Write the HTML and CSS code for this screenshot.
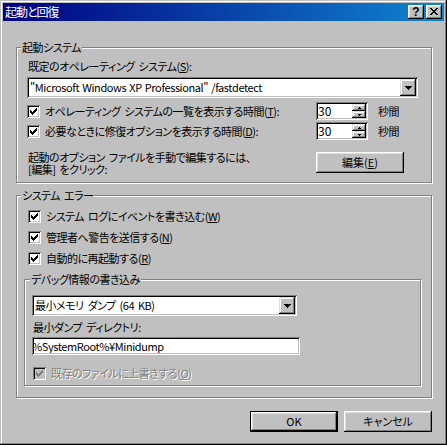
FILE: index.html
```html
<!DOCTYPE html>
<html lang="ja">
<head>
<meta charset="utf-8">
<title>起動と回復</title>
<link rel="stylesheet" href="styles.css">
</head>
<body>
<div class="window">
  <div class="titlebar">
    <span class="title">起動と回復</span>
    <div class="tbtns">
      <span class="tbtn help">?</span>
      <span class="tbtn close"><svg width="8" height="7" viewBox="0 0 8 7" shape-rendering="crispEdges"><path fill="#000" d="M0 0h2v1H0zM6 0h2v1H6zM1 1h2v1H1zM5 1h2v1H5zM2 2h4v1H2zM3 3h2v1H3zM2 4h4v1H2zM1 5h2v1H1zM5 5h2v1H5zM0 6h2v1H0zM6 6h2v1H6z"/></svg></span>
    </div>
  </div>
  <div class="client">
    <fieldset class="group g1">
      <legend class="lg1">起動システム</legend>
      <div class="body1">
        <div class="lbl">既定のオペレーティング システム(<u>S</u>):</div>
        <div class="combo combo1">
          <span class="ctext latin">"Microsoft Windows XP Professional" /fastdetect</span>
          <span class="dd"><svg width="7" height="4" viewBox="0 0 7 4" shape-rendering="crispEdges"><path fill="#000" d="M0 0h7v1H0zM1 1h5v1H1zM2 2h3v1H2zM3 3h1v1H3z"/></svg></span>
        </div>
        <div class="trow first">
          <span class="chk"><svg width="13" height="13" viewBox="0 0 13 13" shape-rendering="crispEdges"><path fill="#000" d="M9 3h1v1H9zM8 4h2v1H8zM3 5h1v1H3zM7 5h3v1H7zM3 6h2v1H3zM6 6h3v1H6zM3 7h5v1H3zM4 8h3v1H4zM5 9h1v1H5z"/></svg></span>
          <span class="tlabel">オペレーティング システムの一覧を表示する時間(<u>T</u>):</span>
          <span class="spin"><span class="stext">30</span><span class="sbtns"><span class="sb"><svg width="3" height="2" viewBox="0 0 3 2" shape-rendering="crispEdges"><path fill="#000" d="M1 0h1v1H1zM0 1h3v1H0z"/></svg></span><span class="sb"><svg width="3" height="2" viewBox="0 0 3 2" shape-rendering="crispEdges"><path fill="#000" d="M0 0h3v1H0zM1 1h1v1H1z"/></svg></span></span></span>
          <span class="unit">秒間</span>
        </div>
        <div class="trow">
          <span class="chk"><svg width="13" height="13" viewBox="0 0 13 13" shape-rendering="crispEdges"><path fill="#000" d="M9 3h1v1H9zM8 4h2v1H8zM3 5h1v1H3zM7 5h3v1H7zM3 6h2v1H3zM6 6h3v1H6zM3 7h5v1H3zM4 8h3v1H4zM5 9h1v1H5z"/></svg></span>
          <span class="tlabel">必要なときに修復オプションを表示する時間(<u>D</u>):</span>
          <span class="spin"><span class="stext">30</span><span class="sbtns"><span class="sb"><svg width="3" height="2" viewBox="0 0 3 2" shape-rendering="crispEdges"><path fill="#000" d="M1 0h1v1H1zM0 1h3v1H0z"/></svg></span><span class="sb"><svg width="3" height="2" viewBox="0 0 3 2" shape-rendering="crispEdges"><path fill="#000" d="M0 0h3v1H0zM1 1h1v1H1z"/></svg></span></span></span>
          <span class="unit">秒間</span>
        </div>
        <div class="note">
          <div class="notetext"><div>起動のオプション ファイルを手動で編集するには、</div><div>[編集] をクリック:</div></div>
          <span class="btn editbtn">編集(<u>E</u>)</span>
        </div>
      </div>
    </fieldset>

    <fieldset class="group g2">
      <legend class="lg1">システム エラー</legend>
      <div class="body2">
        <div class="crow">
          <span class="chk"><svg width="13" height="13" viewBox="0 0 13 13" shape-rendering="crispEdges"><path fill="#000" d="M9 3h1v1H9zM8 4h2v1H8zM3 5h1v1H3zM7 5h3v1H7zM3 6h2v1H3zM6 6h3v1H6zM3 7h5v1H3zM4 8h3v1H4zM5 9h1v1H5z"/></svg></span>
          <span class="clabel">システム ログにイベントを書き込む(<u>W</u>)</span>
        </div>
        <div class="crow">
          <span class="chk"><svg width="13" height="13" viewBox="0 0 13 13" shape-rendering="crispEdges"><path fill="#000" d="M9 3h1v1H9zM8 4h2v1H8zM3 5h1v1H3zM7 5h3v1H7zM3 6h2v1H3zM6 6h3v1H6zM3 7h5v1H3zM4 8h3v1H4zM5 9h1v1H5z"/></svg></span>
          <span class="clabel">管理者へ警告を送信する(<u>N</u>)</span>
        </div>
        <div class="crow">
          <span class="chk"><svg width="13" height="13" viewBox="0 0 13 13" shape-rendering="crispEdges"><path fill="#000" d="M9 3h1v1H9zM8 4h2v1H8zM3 5h1v1H3zM7 5h3v1H7zM3 6h2v1H3zM6 6h3v1H6zM3 7h5v1H3zM4 8h3v1H4zM5 9h1v1H5z"/></svg></span>
          <span class="clabel">自動的に再起動する(<u>R</u>)</span>
        </div>

        <fieldset class="group g3">
          <legend class="lg3">デバッグ情報の書き込み</legend>
          <div class="body3">
            <div class="combo combo2">
              <span class="ctext">最小メモリ ダンプ (64 KB)</span>
              <span class="dd"><svg width="7" height="4" viewBox="0 0 7 4" shape-rendering="crispEdges"><path fill="#000" d="M0 0h7v1H0zM1 1h5v1H1zM2 2h3v1H2zM3 3h1v1H3z"/></svg></span>
            </div>
            <div class="lbl lbl2">最小ダンプ ディレクトリ:</div>
            <div class="edit"><span class="etext latin">%SystemRoot%¥Minidump</span></div>
            <div class="crow dis">
              <span class="chk"><svg width="13" height="13" viewBox="0 0 13 13" shape-rendering="crispEdges"><path fill="#808080" d="M9 3h1v1H9zM8 4h2v1H8zM3 5h1v1H3zM7 5h3v1H7zM3 6h2v1H3zM6 6h3v1H6zM3 7h5v1H3zM4 8h3v1H4zM5 9h1v1H5z"/></svg></span>
              <span class="clabel">既存のファイルに上書きする(<u>O</u>)</span>
            </div>
          </div>
        </fieldset>
      </div>
    </fieldset>

    <div class="actions">
      <span class="btn default">OK</span>
      <span class="btn">キャンセル</span>
    </div>
  </div>
</div>
</body>
</html>
```

FILE: styles.css
```css
* {
  box-sizing: border-box;
}

html,
body {
  margin: 0;
  padding: 0;
}

body {
  background: #c0c0c0;
  color: #000;
  font-family: "Noto Sans CJK JP", "Noto Sans", sans-serif;
  font-size: 11px;
  letter-spacing: -0.5px;
  word-spacing: 2px;
  font-feature-settings: "palt";
}

u {
  text-decoration-thickness: 1px;
  text-underline-offset: 1px;
}

svg {
  display: block;
}

.latin {
  letter-spacing: -0.4px;
  word-spacing: 1px;
}

.window {
  width: 447px;
  height: 445px;
  padding: 3px;
  background: #c0c0c0;
  box-shadow:
    inset -1px -1px #000,
    inset 1px 1px #c0c0c0,
    inset -2px -2px #808080,
    inset 2px 2px #fff;
}

/* title bar */
.titlebar {
  height: 18px;
  display: flex;
  align-items: center;
  justify-content: space-between;
  padding: 0 2px;
  background: linear-gradient(to right, #000080, #1084d0);
}

.title {
  color: #fff;
  font-size: 12px;
  line-height: 18px;
  letter-spacing: -1px;
}

.tbtns {
  display: flex;
  gap: 2px;
}

.tbtn {
  width: 16px;
  height: 14px;
  display: flex;
  align-items: center;
  justify-content: center;
  background: #c0c0c0;
  box-shadow:
    inset -1px -1px #000,
    inset 1px 1px #fff,
    inset -2px -2px #808080,
    inset 2px 2px #dfdfdf;
}

.help {
  font-family: "Liberation Sans", sans-serif;
  font-weight: bold;
  font-size: 12px;
  line-height: 14px;
  letter-spacing: 0;
  padding-bottom: 1px;
}

.close svg {
  margin-top: -1px;
}

/* client */
.client {
  padding-left: 13px;
}

.group {
  margin: 0;
  padding: 0;
  min-inline-size: 0;
  border: 1px solid #808080;
  box-shadow: inset 1px 1px #fff, 1px 1px #fff;
}

.group legend {
  padding: 0 1px;
  line-height: 13px;
  background: #c0c0c0;
}

.lg1 {
  margin-left: 4px;
}

.lg3 {
  margin-left: 5px;
}

.g1 {
  width: 416px;
  margin-top: 20px;
}

.g2 {
  width: 416px;
  margin-top: 6px;
}

.g3 {
  width: 397px;
  margin-top: 4px;
}

.body1 {
  padding: 6px 0 7px 10px;
}

.body2 {
  padding: 4px 0 11px 7px;
}

.body3 {
  padding: 9px 0 3px 7px;
}

.lbl {
  line-height: 13px;
  white-space: nowrap;
  padding-left: 1px;
}

.lbl2 {
  margin-top: 5px;
}

/* sunken fields */
.combo,
.edit,
.spin,
.chk {
  background: #fff;
  box-shadow:
    inset 1px 1px #808080,
    inset -1px -1px #fff,
    inset 2px 2px #000,
    inset -2px -2px #c0c0c0;
}

.combo {
  height: 21px;
  display: flex;
  align-items: center;
  padding: 2px 2px 2px 3px;
}

.combo1 {
  width: 391px;
  margin-top: 4px;
}

.combo2 {
  width: 265px;
}

.ctext {
  flex: 1;
  min-width: 0;
  overflow: hidden;
  white-space: nowrap;
  line-height: 17px;
}

.dd {
  flex: none;
  width: 16px;
  height: 17px;
  display: flex;
  align-items: center;
  justify-content: center;
  background: #c0c0c0;
  box-shadow:
    inset -1px -1px #000,
    inset 1px 1px #dfdfdf,
    inset -2px -2px #808080,
    inset 2px 2px #fff;
}

/* time rows */
.trow {
  height: 20px;
  display: flex;
  align-items: center;
}

.trow.first {
  margin-top: 3px;
}

.chk {
  flex: none;
  width: 13px;
  height: 13px;
}

.tlabel {
  width: 271px;
  margin-left: 5px;
  white-space: nowrap;
  line-height: 13px;
}

.spin {
  width: 52px;
  height: 18px;
  display: flex;
  padding: 2px;
}

.stext {
  flex: 1;
  font-size: 12px;
  letter-spacing: 0;
  line-height: 14px;
}

.sbtns {
  width: 14px;
  display: flex;
  flex-direction: column;
}

.sb {
  height: 7px;
  display: flex;
  align-items: center;
  justify-content: center;
  background: #c0c0c0;
  box-shadow:
    inset -1px -1px #000,
    inset 1px 1px #dfdfdf,
    inset -2px -2px #808080,
    inset 2px 2px #fff;
}

.unit {
  margin-left: 10px;
  line-height: 13px;
}

.note {
  display: flex;
  align-items: flex-start;
  margin-top: 10px;
}

.notetext {
  width: 289px;
  line-height: 12px;
  white-space: nowrap;
  padding-left: 1px;
}

/* buttons */
.btn {
  width: 88px;
  height: 21px;
  display: flex;
  align-items: center;
  justify-content: center;
  line-height: 13px;
  letter-spacing: 0;
  background: #c0c0c0;
  box-shadow:
    inset -1px -1px #000,
    inset 1px 1px #fff,
    inset -2px -2px #808080,
    inset 2px 2px #dfdfdf;
}

.editbtn {
  margin-top: 1px;
}

.btn.default {
  border: 1px solid #000;
}

.actions {
  width: 416px;
  margin-top: 13px;
  display: flex;
  justify-content: flex-end;
  gap: 6px;
}

/* check rows */
.crow {
  height: 21px;
  display: flex;
  align-items: center;
  padding-left: 4px;
}

.clabel {
  margin-left: 5px;
  line-height: 13px;
  white-space: nowrap;
}

.edit {
  width: 268px;
  height: 18px;
  margin-top: 3px;
  padding: 2px;
}

.etext {
  display: block;
  overflow: hidden;
  white-space: nowrap;
  line-height: 14px;
  text-indent: -2px;
}

.crow.dis {
  height: 18px;
  margin-top: 9px;
  padding-left: 1px;
}

.crow.dis .chk {
  background: #c0c0c0;
}

.crow.dis .clabel {
  color: #808080;
  text-shadow: 1px 1px #fff;
}
```
